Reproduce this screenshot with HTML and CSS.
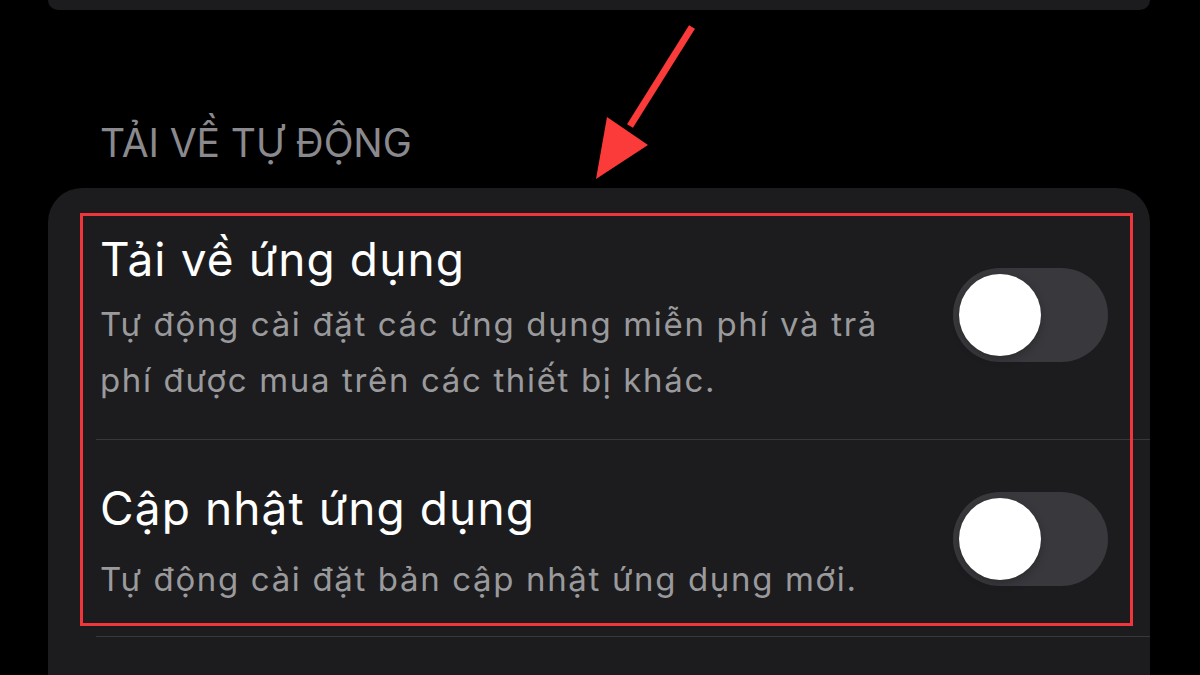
FILE: index.html
```html
<!DOCTYPE html>
<html lang="vi">
<head>
<meta charset="utf-8">
<title>Tải về tự động</title>
<link rel="stylesheet" href="styles.css">
</head>
<body>
<div class="page">
  <div class="card card-top"></div>
  <div class="section-header">TẢI VỀ TỰ ĐỘNG</div>
  <div class="card card-main">
    <div class="row row-first">
      <div class="row-text">
        <div class="row-title row-title-first">Tải về ứng dụng</div>
        <div class="row-sub">Tự động cài đặt các ứng dụng miễn phí và trả<br>phí được mua trên các thiết bị khác.</div>
      </div>
      <div class="toggle"><div class="knob"></div></div>
    </div>
    <div class="row row-second">
      <div class="row-text">
        <div class="row-title row-title-second">Cập nhật ứng dụng</div>
        <div class="row-sub">Tự động cài đặt bản cập nhật ứng dụng mới.</div>
      </div>
      <div class="toggle"><div class="knob"></div></div>
    </div>
    <div class="row row-empty"></div>
  </div>

  <div class="highlight-box"></div>
  <svg class="arrow" width="110" height="165" viewBox="0 0 110 165">
    <line x1="102" y1="7" x2="40" y2="106" stroke="#fb3a3a" stroke-width="7"/>
    <polygon points="17,97 58,125 6,159" fill="#fb3a3a"/>
  </svg>
</div>
</body>
</html>
```

FILE: styles.css
```css
html, body {
  margin: 0;
  padding: 0;
  background: #000;
}

body {
  width: 1200px;
  height: 675px;
  overflow: hidden;
  font-family: Inter, "Noto Sans", "Liberation Sans", sans-serif;
}

.page {
  position: relative;
  width: 1200px;
  height: 675px;
}

.card {
  background: #1c1c1e;
  margin-left: 48px;
  width: 1102px;
}

.card-top {
  height: 10px;
  border-radius: 0 0 34px 34px;
}

.section-header {
  margin: 109px 0 0 100px;
  font-size: 39px;
  line-height: 48px;
  color: #8a8a8e;
  letter-spacing: -0.1px;
  height: 48px;
}

.card-main {
  margin-top: 21px;
  border-radius: 34px 34px 0 0;
  height: 500px;
}

.row {
  display: flex;
  align-items: center;
  justify-content: space-between;
  margin-left: 48px;
  padding-left: 4px;
  padding-right: 42px;
  border-bottom: 1px solid #38383a;
}

.row-first {
  padding-top: 43px;
  padding-bottom: 31px;
}

.row-second {
  padding-top: 40px;
  padding-bottom: 29px;
}

.row-empty {
  border-bottom: none;
  height: 60px;
}

.row-title {
  font-size: 46px;
  line-height: 56px;
  color: #ffffff;
  letter-spacing: 1.1px;
}

.row-title-first {
  margin-bottom: 9px;
}

.row-title-second {
  margin-bottom: 15px;
}

.row-sub {
  font-size: 33px;
  line-height: 56px;
  color: #9a9a9d;
  letter-spacing: 1.65px;
}

.toggle {
  width: 155px;
  height: 94px;
  border-radius: 47px;
  background: #39393d;
  flex-shrink: 0;
  display: flex;
  align-items: center;
  padding-left: 6px;
  box-sizing: border-box;
  margin-bottom: 9px;
}

.knob {
  width: 82px;
  height: 82px;
  border-radius: 50%;
  background: #ffffff;
  box-shadow: 0 3px 8px rgba(0, 0, 0, 0.25);
}

.highlight-box {
  position: absolute;
  left: 80px;
  top: 213px;
  width: 1047px;
  height: 407px;
  border: 3px solid #f0363a;
}

.arrow {
  position: absolute;
  left: 590px;
  top: 20px;
}
```
